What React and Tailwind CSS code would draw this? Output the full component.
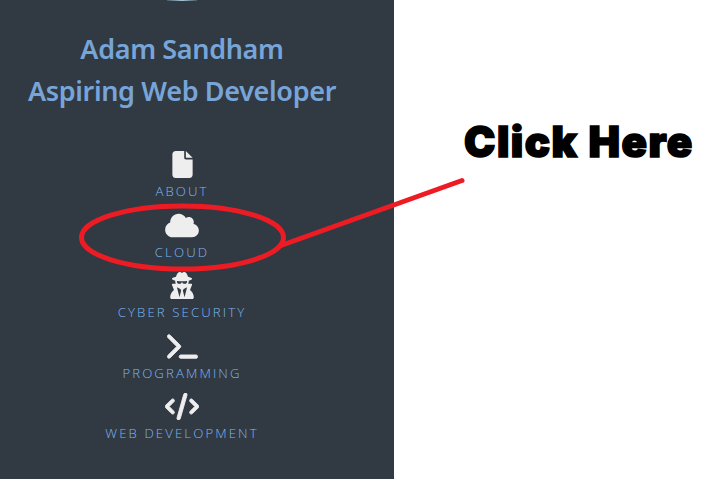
import { FaFile, FaCloud, FaUserSecret, FaTerminal, FaCode } from "react-icons/fa6";

const items = [
  { label: "ABOUT", Icon: FaFile, size: "h-[27px] w-[21px]" },
  { label: "CLOUD", Icon: FaCloud, size: "h-[27px] w-[34px]" },
  { label: "CYBER SECURITY", Icon: FaUserSecret, size: "h-[27px] w-[24px]" },
  { label: "PROGRAMMING", Icon: FaTerminal, size: "h-[27px] w-[31px] stroke-[#eeeeee] [stroke-width:16px]" },
  { label: "WEB DEVELOPMENT", Icon: FaCode, size: "h-[27px] w-[34px] stroke-[#eeeeee] [stroke-width:16px]" },
];

export default function App() {
  return (
    <div className="relative flex h-[479px] w-[707px] overflow-hidden bg-white">
      <aside className="relative flex w-[394px] shrink-0 flex-col bg-[#313943] pr-[30px]">
        <div className="absolute left-[167px] top-0 h-px w-[30px] bg-linear-to-r from-[#4b5b69] via-[#a9c6d8] to-[#4b5b69]" />
        <h1 className="flex flex-col items-center whitespace-nowrap pt-[28px] font-['Noto_Sans',sans-serif] text-[27px] font-semibold leading-[42px] tracking-[-0.35px] text-[#78a5d8]">
          <span>Adam Sandham</span>
          <span>Aspiring Web Developer</span>
        </h1>
        <nav className="mt-[39.2px] flex flex-col">
          {items.map(({ label, Icon, size }) => (
            <a key={label} className="flex h-[60.5px] flex-col items-center">
              <Icon className={`shrink-0 text-[#eeeeee] ${size}`} />
              <span className="mt-[3px] whitespace-nowrap font-['Open_Sans',sans-serif] text-[13.2px] font-light leading-[20px] tracking-[2.1px] text-[#7db6f2]">
                {label}
              </span>
            </a>
          ))}
        </nav>
      </aside>
      <main className="pl-[70px] pt-[111.500px]">
        <p className="whitespace-nowrap font-[Inter,sans-serif] text-[42px] font-black leading-[60px] tracking-[1.5px] text-black [-webkit-text-stroke:1.6px_black]">
          Click Here
        </p>
      </main>
      <svg className="absolute inset-0" width="707" height="479" fill="none" stroke="#ed1c24" strokeWidth="5" strokeLinecap="round">
        <ellipse cx="182.500" cy="237.500" rx="101" ry="31.500" />
        <path d="M281 245.500L462 180.500" />
      </svg>
    </div>
  );
}
